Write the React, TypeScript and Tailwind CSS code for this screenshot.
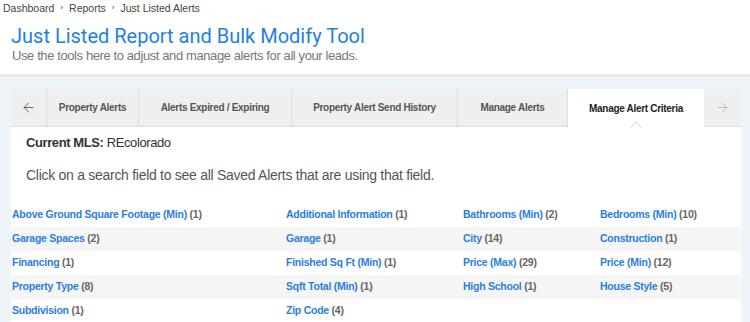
import { ArrowLeft, ArrowRight } from "lucide-react";

const tabs = [
  { label: "Property Alerts", w: "w-[92px]" },
  { label: "Alerts Expired / Expiring", w: "w-[153px]" },
  { label: "Property Alert Send History", w: "w-[166px]" },
  { label: "Manage Alerts", w: "w-[110px]" },
];

const fields: [string, number][] = [
  ["Above Ground Square Footage (Min)", 1],
  ["Additional Information", 1],
  ["Bathrooms (Min)", 2],
  ["Bedrooms (Min)", 10],
  ["Garage Spaces", 2],
  ["Garage", 1],
  ["City", 14],
  ["Construction", 1],
  ["Financing", 1],
  ["Finished Sq Ft (Min)", 1],
  ["Price (Max)", 29],
  ["Price (Min)", 12],
  ["Property Type", 8],
  ["Sqft Total (Min)", 1],
  ["High School", 1],
  ["House Style", 5],
  ["Subdivision", 1],
  ["Zip Code", 4],
];

function chunk<T>(arr: T[], n: number): T[][] {
  const out: T[][] = [];
  for (let i = 0; i < arr.length; i += n) out.push(arr.slice(i, i + n));
  return out;
}

export default function App() {
  const rows = chunk(fields, 4);

  return (
    <div className="w-[750px] h-[322px] overflow-hidden bg-[#eef4f7] font-['Liberation_Sans',Arial,sans-serif]">
      {/* Header */}
      <div className="bg-white h-[77px] border-b-[3px] border-[#e2eaee] px-[3px]">
        <div className="flex items-center gap-[6px] text-[10.5px] leading-[16px] text-[#444]">
          <span>Dashboard</span>
          <span className="text-[8px]">›</span>
          <span>Reports</span>
          <span className="text-[8px]">›</span>
          <span>Just Listed Alerts</span>
        </div>
        <h1 className="pl-[8px] mt-[8px] font-['Roboto',sans-serif] text-[20px] leading-[24px] text-[#1f7fe6]">
          Just Listed Report and Bulk Modify Tool
        </h1>
        <p className="pl-[9px] text-[13px] tracking-[-0.4px] leading-[16px] text-[#777]">
          Use the tools here to adjust and manage alerts for all your leads.
        </p>
      </div>

      {/* Panel */}
      <div className="ml-[11px] mt-[12px] w-[730px] bg-white">
        <div className="flex h-[38px] bg-[#efefef] border-b border-[#dcdcdc] text-[10px] tracking-[-0.3px] font-bold">
          <div className="w-[36px] flex items-center justify-center border-r border-[#dedede] text-[#333]">
            <ArrowLeft size={15} strokeWidth={1.2} />
          </div>
          {tabs.map((t) => (
            <div
              key={t.label}
              className={`${t.w} flex items-center justify-center border-r border-[#dedede] text-[#555]`}
            >
              {t.label}
            </div>
          ))}
          <div className="relative w-[136px] flex items-center justify-center bg-white text-[#222] -mb-px">
            Manage Alert Criteria
            <span className="absolute bottom-[-5px] left-1/2 -translate-x-1/2 w-[9px] h-[9px] rotate-45 bg-white border-l border-t border-[#dcdcdc]" />
          </div>
          <div className="flex-1 flex items-center justify-center text-[#aaa]">
            <ArrowRight size={15} strokeWidth={1.2} />
          </div>
        </div>

        <div className="pt-[8px]">
          <p className="pl-[15px] text-[13px] tracking-[-0.4px] leading-[16px] text-[#333]">
            <span className="font-bold">Current MLS:</span> REcolorado
          </p>
          <p className="pl-[15px] mt-[14px] text-[14px] tracking-[-0.28px] leading-[20px] text-[#555]">
            Click on a search field to see all Saved Alerts that are using that field.
          </p>
        </div>

        <div className="mt-[18px]">
          {rows.map((row, i) => (
            <div
              key={i}
              className={`grid grid-cols-[274px_177px_137px_1fr] h-[24px] items-center pl-[1px] text-[10.5px] tracking-[-0.25px] font-bold ${
                i % 2 === 1 ? "bg-[#f5f5f5]" : "bg-white"
              }`}
            >
              {row.map(([name, count]) => (
                <div key={name} className="whitespace-nowrap">
                  <span className="text-[#2a7ee0]">{name}</span>{" "}
                  <span className="text-[#666]">({count})</span>
                </div>
              ))}
            </div>
          ))}
        </div>
      </div>
    </div>
  );
}
